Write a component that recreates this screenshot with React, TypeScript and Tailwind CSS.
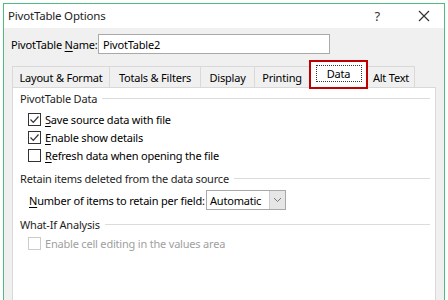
const font = "font-['Segoe_UI','Noto_Sans',sans-serif]";

function Check({ checked, disabled }: { checked?: boolean; disabled?: boolean }) {
  return (
    <span
      className={`flex h-[13px] w-[13px] shrink-0 items-center justify-center border bg-white ${
        disabled ? "border-[#cccccc]" : "border-[#333333]"
      }`}
    >
      {checked && (
        <svg width="11" height="11" viewBox="0 0 11 11">
          <path d="M1.5 5.5 L4.3 8.3 L9.5 2.5" fill="none" stroke="#333" strokeWidth="1.2" />
        </svg>
      )}
    </span>
  );
}

function Group({ title }: { title: string }) {
  return (
    <div className="flex h-[18px] items-center gap-[5px] pr-[5px]">
      <span className="whitespace-nowrap text-[#1e1e1e]">{title}</span>
      <div className="h-px flex-1 bg-[#dcdcdc]" />
    </div>
  );
}

function Row({ label, u, checked, disabled }: { label: string; u: string; checked?: boolean; disabled?: boolean }) {
  return (
    <div className="flex h-[18px] items-center gap-[4px] pl-[8px]">
      <Check checked={checked} disabled={disabled} />
      <span className={`whitespace-nowrap ${disabled ? "text-[#a0a0a0]" : "text-black"}`}>
        {u ? <span className="underline underline-offset-2">{u}</span> : null}
        {label}
      </span>
    </div>
  );
}

const tabs = [
  { name: "Layout & Format", w: "w-[97px]" },
  { name: "Totals & Filters", w: "w-[91px]" },
  { name: "Display", w: "w-[54px]" },
  { name: "Printing", w: "w-[55px]" },
];

export default function App() {
  return (
    <div
      className={`h-[300px] w-[448px] overflow-hidden bg-white px-[3px] pt-[3px] text-[11px] leading-none tracking-[-0.2px] text-black ${font}`}
    >
      <div className="flex h-[300px] flex-col border border-b-0 border-[#4fbb7c] bg-[#f0f0f0]">
        {/* title bar */}
        <div className="flex h-[24px] items-center bg-white pl-[4px] pr-[14px]">
          <span className="flex-1 text-[11.5px] text-[#222]">PivotTable Options</span>
          <span className="mr-[38px] text-[13px] text-[#333]">?</span>
          <svg width="12" height="12" viewBox="0 0 12 12">
            <path d="M1 1 L11 11 M11 1 L1 11" stroke="#333" strokeWidth="1.2" />
          </svg>
        </div>

        {/* name */}
        <div className="mt-[6px] flex items-center pl-[7px]">
          <span className="w-[87px] whitespace-nowrap">
            PivotTable <span className="underline underline-offset-2">N</span>ame:
          </span>
          <div className="flex h-[20px] w-[232px] items-center border border-[#a9a9a9] bg-white pl-[4px]">
            PivotTable2
          </div>
        </div>

        {/* tabs */}
        <div className="mt-[6px] flex h-[27px] items-end pl-[8px]">
          {tabs.map((t) => (
            <div
              key={t.name}
              className={`flex h-[21px] items-center justify-center whitespace-nowrap border border-r-0 border-b-0 border-[#d9d9d9] bg-[#f0f0f0] ${t.w}`}
            >
              {t.name}
            </div>
          ))}
          <div className="relative z-10 -mb-[2px] flex h-[29px] w-[59px] items-start justify-center border-2 border-[#c00000] bg-white pt-[3px]">
            <span className="flex h-[17px] w-[46px] items-center justify-center border border-dotted border-[#333]">Data</span>
          </div>
          <div className="flex h-[21px] w-[47px] items-center justify-center whitespace-nowrap border border-l-0 border-b-0 border-[#d9d9d9] bg-[#f0f0f0]">
            Alt Text
          </div>
        </div>

        {/* panel */}
        <div className="mx-[8px] flex-1 border border-[#d9d9d9] bg-white pl-[7px] pt-[1px]">
          <Group title="PivotTable Data" />
          <div className="mt-[3px]">
            <Row u="S" label="ave source data with file" checked />
            <Row u="E" label="nable show details" checked />
            <Row u="R" label="efresh data when opening the file" />
          </div>
          <div className="mt-[5px]">
            <Group title="Retain items deleted from the data source" />
          </div>
          <div className="mt-[3px] flex items-center gap-[4px] pl-[9px]">
            <span className="w-[173px] whitespace-nowrap">
              <span className="underline underline-offset-2">N</span>umber of items to retain per field:
            </span>
            <div className="flex h-[20px] w-[80px] items-center border border-[#a9a9a9] bg-white">
              <span className="flex-1 pl-[3px]">Automatic</span>
              <div className="flex h-full w-[16px] items-center justify-center border-l border-[#cccccc] bg-[#e6e6e6]">
                <svg width="9" height="6" viewBox="0 0 9 6">
                  <path d="M1 1 L4.5 4.5 L8 1" fill="none" stroke="#777" strokeWidth="1" />
                </svg>
              </div>
            </div>
          </div>
          <div className="mt-[5px]">
            <Group title="What-If Analysis" />
          </div>
          <div className="mt-[1px]">
            <Row u="" label="Enable cell editing in the values area" disabled />
          </div>
        </div>
      </div>
    </div>
  );
}
